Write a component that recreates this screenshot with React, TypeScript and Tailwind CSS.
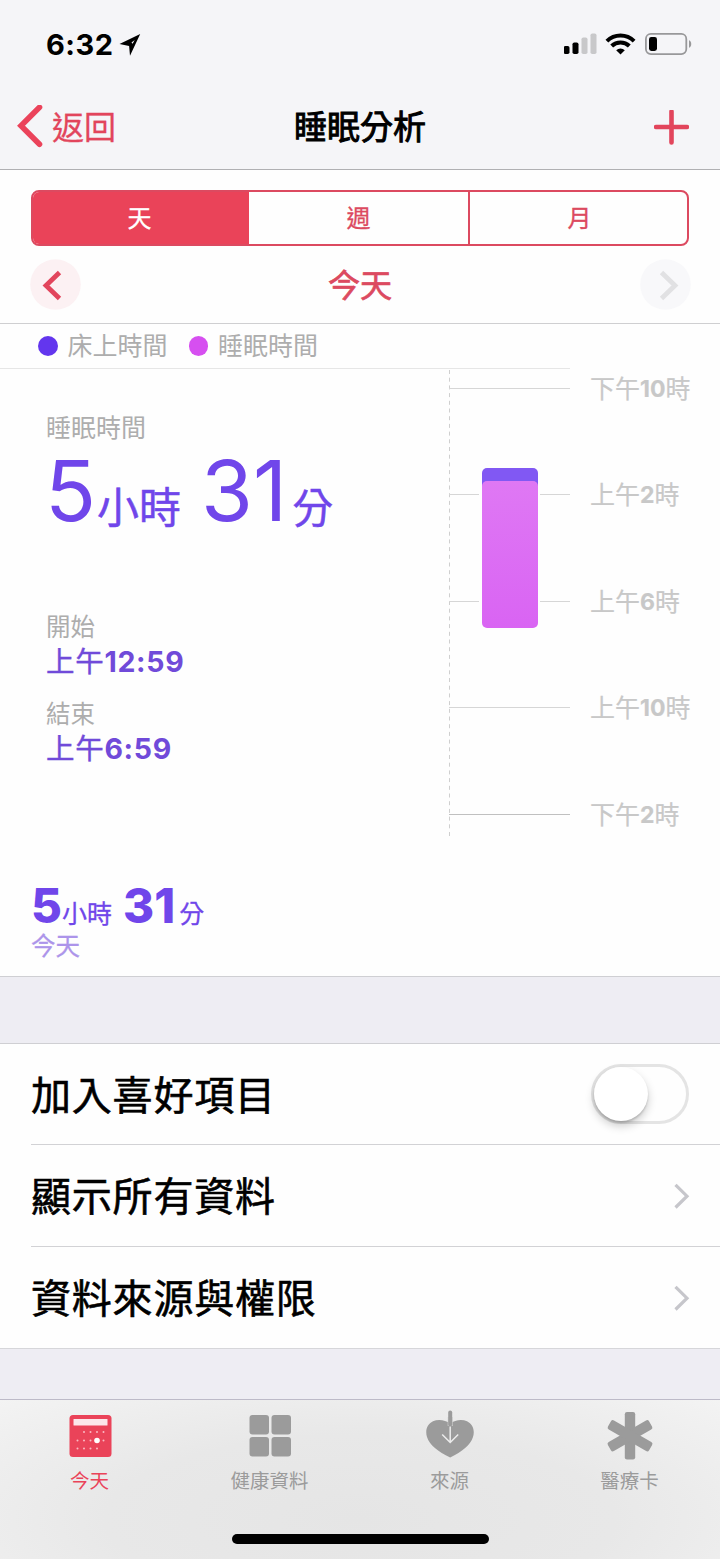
import type {ReactNode} from "react";

const legend = [
    {label: "床上時間", dot: "bg-[#6336ee]"},
    {label: "睡眠時間", dot: "bg-[#d64ff0]"},
];

const hours = [
    {prefix: "下午", hour: "10"},
    {prefix: "上午", hour: "2"},
    {prefix: "上午", hour: "6"},
    {prefix: "上午", hour: "10"},
    {prefix: "下午", hour: "2"},
];

function StatusBar() {
    return (
        <div className="flex h-[88px] items-center pl-[46px] pr-[27px]">
            <span className="text-[29px] leading-none font-bold tracking-[0.5px]">6:32</span>
            <svg className="ml-[5px]" width="22" height="24" viewBox="0 0 22 24">
                <path d="M21.2 2 .5 12l9.6 1.9L11 23.8Z" fill="#000"/>
                <path d="m12.5 10.6 3.2-2.5-2.1 3.6Z" fill="#f5f5f8"/>
            </svg>
            <div className="ml-auto flex items-center">
                <svg width="34" height="22" viewBox="0 0 34 22">
                    <rect x="-0.5" y="13" width="6" height="8" rx="1.8" fill="#000"/>
                    <rect x="8.5" y="9.5" width="6" height="11.5" rx="1.8" fill="#000"/>
                    <rect x="17.5" y="4.5" width="6" height="16.5" rx="1.8" fill="#c8c8ca"/>
                    <rect x="26.5" y="0.5" width="6" height="20.5" rx="1.8" fill="#c8c8ca"/>
                </svg>
                <svg className="mr-[9px] ml-[7px]" width="31" height="22" viewBox="0 0 31 22">
                    <g fill="none" stroke="#000" strokeWidth="4">
                        <path d="M1.9 8.2a19.3 19.3 0 0 1 27.2 0"/>
                        <path d="M6.7 13a12.5 12.5 0 0 1 17.6 0"/>
                    </g>
                    <path d="m15.5 21.5-4.3-4.3a6.2 6.2 0 0 1 8.6 0Z" fill="#000"/>
                </svg>
                <svg width="48" height="22" viewBox="0 0 48 22">
                    <rect x="0.9" y="0.9" width="40.4" height="20.2" rx="5" fill="none" stroke="#98989a" strokeWidth="1.8"/>
                    <rect x="4" y="4" width="8" height="14" rx="2.4" fill="#000"/>
                    <path d="M44 7.2c3 1.2 3 6.4 0 7.6Z" fill="#98989a"/>
                </svg>
            </div>
        </div>
    )
}

function NavBar() {
    return (
        <div className="grid h-[81px] grid-cols-3 items-center pb-[3px] text-[32px] leading-none">
            <div className="flex items-center pl-4 text-[#e2455c]">
                <svg width="27" height="44" viewBox="0 0 27 44">
                    <path d="M23.5 2.300 5 20.800l18.500 18.500" fill="none" stroke="#eb435b" strokeWidth="5.6" strokeLinecap="round"/>
                </svg>
                <span className="ml-[9px] pt-px [-webkit-text-stroke:0.3px]">返回</span>
            </div>
            <h1 className="text-center text-[33px] [-webkit-text-stroke:1px_#000]">睡眠分析</h1>
            <svg className="mr-[31px] justify-self-end" width="35" height="35" viewBox="0 0 35 35">
                <path d="M17.5 1.500v31M2 17h31" stroke="#e2455c" strokeWidth="4.6" strokeLinecap="round"/>
            </svg>
        </div>
    )
}

function RangePicker() {
    return (
        <div className="px-[31px] pt-5">
            <div className="grid h-14 grid-cols-[216px_219px_1fr] overflow-hidden rounded-lg border-2 border-[#dc4a60] text-2xl leading-none text-[#dc4a60] [-webkit-text-stroke:0.3px]">
                <div className="flex items-center justify-center bg-[#ea4359] pt-[2px] pr-[3px] text-white">天</div>
                <div className="flex items-center justify-center pt-[2px]">週</div>
                <div className="flex items-center justify-center border-l-2 border-[#dc4a60] pt-[2px] pl-[2px]">月</div>
            </div>
        </div>
    )
}

function DayPicker() {
    return (
        <div className="flex h-[78px] items-center justify-between border-b border-[#cfcfd1] pl-[30px] pr-[29px]">
            <svg width="51" height="51" viewBox="0 0 51 51">
                <circle cx="25.5" cy="25.5" r="25.3" fill="#fcf1f3"/>
                <path d="M29.5 13.500 16 26.500l13.500 13" fill="none" stroke="#e2455c" strokeWidth="4.8"/>
            </svg>
            <span className="pt-[3px] pr-px text-[32px] leading-none text-[#dc4a60] [-webkit-text-stroke:0.7px]">今天</span>
            <svg width="51" height="51" viewBox="0 0 51 51">
                <circle cx="25.5" cy="25.5" r="25.3" fill="#f8f8fa"/>
                <path d="m21.500 13.500 13.500 13-13.500 13" fill="none" stroke="#e1e1e3" strokeWidth="4.8"/>
            </svg>
        </div>
    )
}

function Legend() {
    return (
        <div className="mr-[150px] flex h-[45px] items-center gap-[21px] border-b border-[#e6e6e6] pl-[38px] text-[25px] leading-none text-[#adadad]">
            {legend.map((item) => (
                <div key={item.label} className="flex items-center gap-[10px]">
                    <span className={`size-[19.5px] rounded-full ${item.dot}`}/>
                    {item.label}
                </div>
            ))}
        </div>
    )
}

function TimeField({label, time}: { label: string; time: string }) {
    return (
        <div className="h-[86.5px]">
            <div className="text-[24.5px] leading-[26px] text-[#adadad]">{label}</div>
            <div className="mt-1.5 text-[28.5px] leading-8 font-bold tracking-[0.7px] text-[#704ad9]">
                <span className="font-normal [-webkit-text-stroke:0.4px]">上午</span>{time}
            </div>
        </div>
    )
}

function SleepChart() {
    return (
        <div className="flex">
            <svg width="122" height="470" viewBox="0 0 122 470">
                <defs>
                    <linearGradient id="asleep" x1="0" y1="0" x2="0" y2="1">
                        <stop offset="0" stopColor="#df78f4"/>
                        <stop offset="1" stopColor="#d964f3"/>
                    </linearGradient>
                </defs>
                <path d="M.5 1v467" stroke="#cfcfcf" strokeDasharray="4 3.7"/>
                <g stroke="#d6d6d6">
                    <path d="M0 19.5h121M0 125.5h30M91 125.5h30M0 232.5h30M91 232.5h30M0 338.5h121"/>
                    <path d="M0 445.5h121" stroke="#c0c0c0"/>
                </g>
                <rect x="33" y="99" width="56" height="40" rx="5" fill="#8158f3"/>
                <rect x="33" y="112" width="56" height="147" rx="5" fill="url(#asleep)"/>
            </svg>
            <div className="-mt-[33px] ml-[19px] text-[25px] leading-none text-[#c8c8c8] [-webkit-text-stroke:0.2px]">
                {hours.map((h) => (
                    <div key={h.prefix + h.hour} className="flex h-[106.5px] items-center whitespace-nowrap">
                        {h.prefix}<span className="text-[23px] font-bold">{h.hour}</span>時
                    </div>
                ))}
            </div>
        </div>
    )
}

function SleepDetails() {
    return (
        <div className="flex h-[470px]">
            <div className="w-[449px] pl-[46px] pt-[46px]">
                <div className="text-[25px] leading-[26px] text-[#adadad]">睡眠時間</div>
                <div className="-ml-px mt-[7px] flex h-[86px] items-baseline text-[84px] leading-[86px] text-[#7046ea]">
                    5<span className="ml-px translate-y-0.5 text-[42px] [-webkit-text-stroke:0.5px]">小時</span>
                    <span className="ml-5">31</span><span className="ml-[5px] translate-y-0.5 text-[41px] [-webkit-text-stroke:0.5px]">分</span>
                </div>
                <div className="pt-20">
                    <TimeField label="開始" time="12:59"/>
                    <TimeField label="結束" time="6:59"/>
                </div>
            </div>
            <SleepChart/>
        </div>
    )
}

function Summary() {
    return (
        <div className="h-[138px] border-b border-[#cfcfd3] pl-[31px] pt-[43px] text-[#7046ea]">
            <div className="flex h-12 items-baseline text-[47.5px] leading-[48px] font-extrabold">
                5<span className="text-[25px] font-normal [-webkit-text-stroke:0.3px]">小時</span>
                <span className="ml-[11px]">31</span><span className="ml-1 text-[25px] font-normal [-webkit-text-stroke:0.3px]">分</span>
            </div>
            <div className="mt-1 text-[24.5px] leading-6 text-[#ac94ea] [-webkit-text-stroke:0.3px]">今天</div>
        </div>
    )
}

function Chevron() {
    return (
        <svg className="-mr-px" width="16" height="26" viewBox="0 0 16 26">
            <path d="m1.5 1.8 11.5 11.4L1.5 24.5" fill="none" stroke="#c6c6cb" strokeWidth="3.2"/>
        </svg>
    )
}

function Toggle() {
    return (
        <div className="flex h-[60px] w-[98px] items-center rounded-full border-3 border-[#e4e4e4]">
            <div className="size-[54px] rounded-full bg-white shadow-[0_5px_10px_rgba(0,0,0,0.2),0_2px_2px_rgba(0,0,0,0.15)]"/>
        </div>
    )
}

function Row({label, children}: { label: string; children: ReactNode }) {
    return (
        <div className="flex h-full items-center justify-between pr-[31px] text-[40px] leading-none tracking-[0.8px]">
            <span className="pt-[3px] [-webkit-text-stroke:0.6px_#000]">{label}</span>
            {children}
        </div>
    )
}

function Tab({label, active, children}: { label: string; active?: boolean; children: ReactNode }) {
    return (
        <div className={`flex flex-col items-center ${active ? "text-[#ea4359]" : "text-[#9b9b9b]"}`}>
            <svg width="48" height="52" viewBox="0 0 48 52" fill="currentColor">{children}</svg>
            <span className="mt-[9px] pr-px text-[19.5px] leading-5">{label}</span>
        </div>
    )
}

function TabBar() {
    return (
        <div className="h-[160px] border-t border-[#bdbac8] bg-[radial-gradient(ellipse_at_50%_75%,#e5e5e5_0%,#e8e8e8_50%,#f3f3f3_100%)] pt-[10px]">
            <div className="grid grid-cols-4">
                <Tab label="今天" active>
                    <rect x="3.5" y="5" width="42" height="42" rx="3.5"/>
                    <rect x="7.5" y="9" width="34" height="6.5" rx="0.5" fill="#fce6ea"/>
                    <path
                        d="M18 22h0M24.5 22h0M31 22h0M37.5 22h0M11.5 30.5h0M18 30.5h0M24.5 30.5h0M37.5 30.5h0M11.5 38.5h0M18 38.5h0M24.5 38.5h0M31 38.5h0"
                        stroke="#f9b9c2" strokeWidth="2" strokeLinecap="round"
                    />
                    <circle cx="31" cy="30.5" r="2.8" fill="#fff"/>
                </Tab>
                <Tab label="健康資料">
                    <rect x="3.5" y="5" width="19.5" height="19.5" rx="3"/>
                    <rect x="25.5" y="5" width="19.5" height="19.5" rx="3"/>
                    <rect x="3.5" y="27" width="19.5" height="19.5" rx="3"/>
                    <rect x="25.5" y="27" width="19.5" height="19.5" rx="3"/>
                </Tab>
                <Tab label="來源">
                    <path d="M24.2 13.5C19.5 9.8 12 9 7 11.2 1 14-1 20.500 1 27c2.500 8 11 14.500 23.200 20.500 12-6 20.300-12.500 22.800-20.500 2-6.500 0-13-6-15.800-5-2.200-12.100-1.400-16.800 2.300Z"/>
                    <path d="M24.2 7V16" fill="none" stroke="#d4d4d4" strokeWidth="5"/>
                    <path d="M24.2 2.500V14.500" fill="none" stroke="currentColor" strokeWidth="4" strokeLinecap="round"/>
                    <path d="M24.2 16.500V32M16.200 24.500l8 8 8-8" fill="none" stroke="#ececec" strokeWidth="1.5"/>
                </Tab>
                <Tab label="醫療卡">
                    <rect x="18.8" y="2" width="10.4" height="47.5" rx="2.2"/>
                    <rect x="18.8" y="2" width="10.4" height="47.5" rx="2.2" transform="rotate(60 24 25.7)"/>
                    <rect x="18.8" y="2" width="10.4" height="47.5" rx="2.2" transform="rotate(-60 24 25.7)"/>
                </Tab>
            </div>
            <div className="mx-auto mt-[43px] h-[10px] w-[257px] rounded-full bg-black"/>
        </div>
    )
}

function App() {
    return (
        <div className="h-[1559px] w-[720px] overflow-hidden bg-[#fefefe] font-['Inter','Noto_Sans_CJK_TC',sans-serif] text-black" lang="zh-Hant">
            <div className="border-b border-[#b0b0b3] bg-[#f5f5f8]">
                <StatusBar/>
                <NavBar/>
            </div>
            <RangePicker/>
            <DayPicker/>
            <Legend/>
            <SleepDetails/>
            <Summary/>
            <div className="h-[67px] border-b border-[#cfcfd3] bg-[#eeedf3]"/>
            <div className="grid h-[304px] grid-rows-[101px_102px_101px] divide-y divide-[#d2d2d5] pl-[31px]">
                <Row label="加入喜好項目"><Toggle/></Row>
                <Row label="顯示所有資料"><Chevron/></Row>
                <Row label="資料來源與權限"><Chevron/></Row>
            </div>
            <div className="h-[51px] border-t border-[#d6d6da] bg-[#eeedf3]"/>
            <TabBar/>
        </div>
    )
}

export default App
